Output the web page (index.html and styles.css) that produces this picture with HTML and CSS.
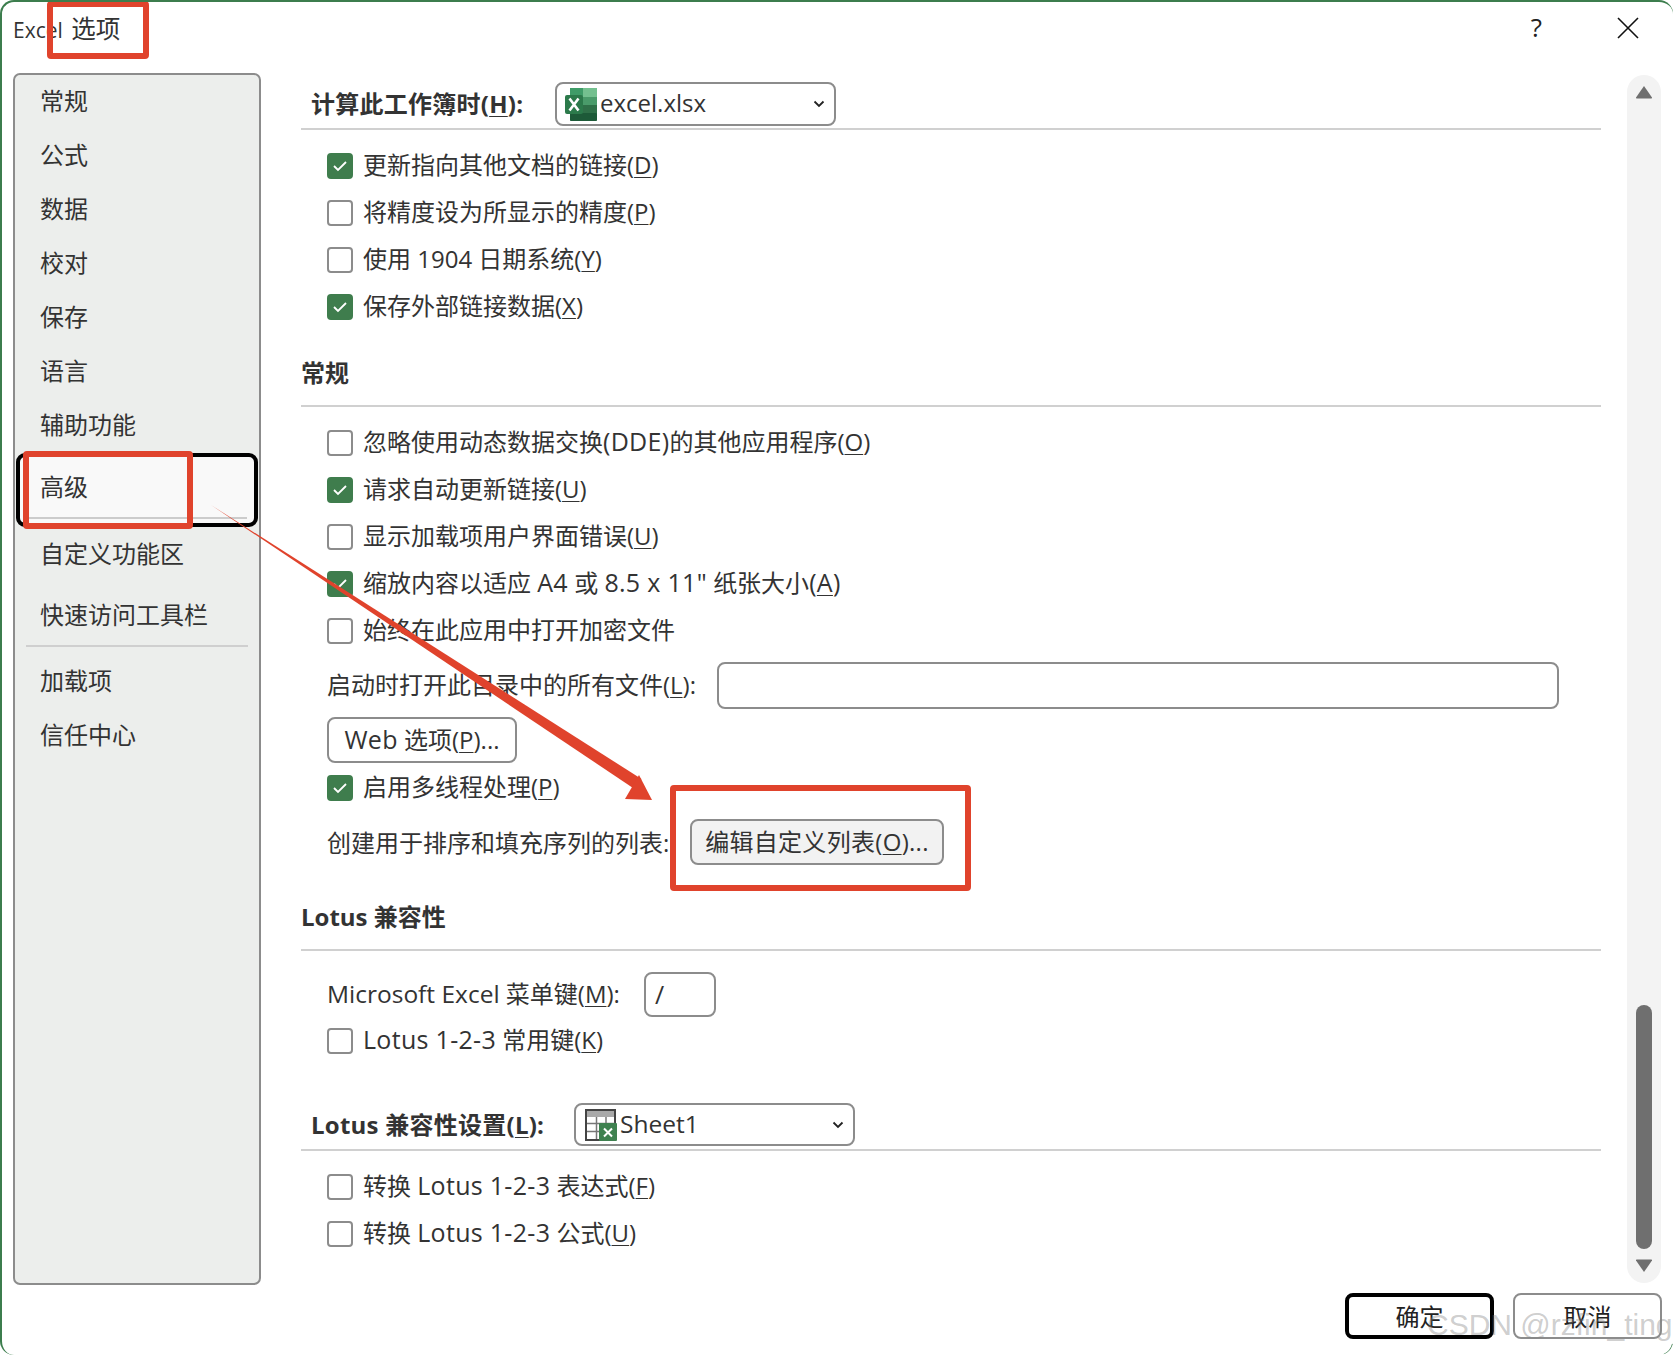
FILE: index.html
```html
<!DOCTYPE html>
<html lang="zh-CN">
<head>
<meta charset="utf-8">
<title>Excel 选项</title>
<link rel="stylesheet" href="styles.css">
</head>
<body>
<div class="window">
  <header class="titlebar">
    <span class="title">Excel <span class="title-cjk">选项</span></span>
    <span class="help">?</span>
    <svg class="close" width="22" height="22" viewBox="0 0 22 22"><path d="M1 1L21 21M21 1L1 21" stroke="#111" stroke-width="1.6" fill="none"/></svg>
  </header>
  <div class="content">
    <nav class="sidebar">
      <div class="nav">常规</div>
      <div class="nav">公式</div>
      <div class="nav">数据</div>
      <div class="nav">校对</div>
      <div class="nav">保存</div>
      <div class="nav">语言</div>
      <div class="nav">辅助功能</div>
      <div class="nav nav-active">高级<i class="nav-rule"></i></div>
      <div class="nav nav-custom">自定义功能区</div>
      <div class="nav nav-quick">快速访问工具栏</div>
      <div class="divider"></div>
      <div class="nav nav-addin">加载项</div>
      <div class="nav">信任中心</div>
    </nav>
    <main class="main">
      <div class="combo-head head-first">
        <span class="combo-label label-calc">计算此工作簿时(<u>H</u>):</span>
        <div class="combo combo-book">
          <svg class="icon-book" width="32" height="33" viewBox="0 0 32 33">
            <rect x="5" y="0" width="27" height="33" rx="2" fill="#2e8b57"/>
            <rect x="18" y="0" width="14" height="9" fill="#74c08f"/>
            <rect x="5" y="0" width="13" height="9" fill="#3f9c68"/>
            <rect x="18" y="9" width="14" height="8" fill="#4a9b6a"/>
            <rect x="5" y="9" width="13" height="8" fill="#2d7d50"/>
            <rect x="18" y="17" width="14" height="8" fill="#2f7048"/>
            <rect x="5" y="17" width="13" height="8" fill="#236e45"/>
            <rect x="5" y="25" width="27" height="8" rx="1" fill="#1d5a38"/>
            <rect x="0" y="7" width="18" height="19" rx="2" fill="#2c7a4b"/>
            <path d="M4.500 10.500L13.500 22.500M13.500 10.500L4.500 22.500" stroke="#fff" stroke-width="2.600" fill="none"/>
          </svg>
          <span class="combo-text text-book">excel.xlsx</span>
          <svg class="chev" width="12" height="8" viewBox="0 0 12 8"><path d="M1.500 1.500L6 6L10.500 1.500" stroke="#222" stroke-width="1.800" fill="none"/></svg>
        </div>
      </div>
      <div class="rows">
        <label class="row"><i class="cb on"><svg width="16" height="12" viewBox="0 0 16 12"><path d="M2 6L6 10L14 2" stroke="#fff" stroke-width="1.800" fill="none"/></svg></i><span class="txt">更新指向其他文档的链接(<u>D</u>)</span></label>
        <label class="row"><i class="cb"></i><span class="txt">将精度设为所显示的精度(<u>P</u>)</span></label>
        <label class="row"><i class="cb"></i><span class="txt">使用 1904 日期系统(<u>Y</u>)</span></label>
        <label class="row"><i class="cb on"><svg width="16" height="12" viewBox="0 0 16 12"><path d="M2 6L6 10L14 2" stroke="#fff" stroke-width="1.800" fill="none"/></svg></i><span class="txt">保存外部链接数据(<u>X</u>)</span></label>
      </div>
      <h2 class="section sec-general">常规</h2>
      <div class="rows">
        <label class="row"><i class="cb"></i><span class="txt">忽略使用动态数据交换<span class="la">(DDE)</span>的其他应用程序(<u>O</u>)</span></label>
        <label class="row"><i class="cb on"><svg width="16" height="12" viewBox="0 0 16 12"><path d="M2 6L6 10L14 2" stroke="#fff" stroke-width="1.800" fill="none"/></svg></i><span class="txt">请求自动更新链接(<u>U</u>)</span></label>
        <label class="row"><i class="cb"></i><span class="txt">显示加载项用户界面错误(<u>U</u>)</span></label>
        <label class="row"><i class="cb on"><svg width="16" height="12" viewBox="0 0 16 12"><path d="M2 6L6 10L14 2" stroke="#fff" stroke-width="1.800" fill="none"/></svg></i><span class="txt">缩放内容以适应 <span class="la">A4</span> 或 <span class="la">8.5 x 11"</span> 纸张大小<span class="la">(<u>A</u>)</span></span></label>
        <label class="row"><i class="cb"></i><span class="txt">始终在此应用中打开加密文件</span></label>
      </div>
      <div class="field-row">
        <span class="field-label">启动时打开此目录中的所有文件(<u>L</u>):</span>
        <div class="input input-path"></div>
      </div>
      <div class="btn btn-web"><span class="la">Web</span> 选项(<u>P</u>)...</div>
      <label class="row row-thread"><i class="cb on"><svg width="16" height="12" viewBox="0 0 16 12"><path d="M2 6L6 10L14 2" stroke="#fff" stroke-width="1.800" fill="none"/></svg></i><span class="txt">启用多线程处理(<u>P</u>)</span></label>
      <div class="list-row">
        <span class="list-label">创建用于排序和填充序列的列表:</span>
        <div class="btn btn-list">编辑自定义列表(<u>O</u>)...</div>
      </div>
      <h2 class="section sec-lotus">Lotus 兼容性</h2>
      <div class="menu-row">
        <span class="menu-label"><span class="la-soft">Microsoft Excel</span> 菜单键(<u>M</u>):</span>
        <div class="input input-key">/</div>
      </div>
      <label class="row"><i class="cb"></i><span class="txt"><span class="la">Lotus 1-2-3</span> 常用键(<u>K</u>)</span></label>
      <div class="combo-head head-lotus">
        <span class="combo-label label-lotus">Lotus 兼容性设置(<u>L</u>):</span>
        <div class="combo combo-sheet">
          <svg class="icon-sheet" width="32" height="32" viewBox="0 0 32 32">
            <rect x="1" y="1" width="29" height="30" fill="#fff" stroke="#444" stroke-width="2"/>
            <rect x="2" y="2" width="27" height="6" fill="#a9a9a9"/>
            <path d="M2 14.500H30M2 22.500H30M11.500 8V30M21 8V30" stroke="#777" stroke-width="1.500" fill="none"/>
            <rect x="14" y="14" width="18" height="18" rx="1" fill="#3f8150"/>
            <path d="M19 19.500L27 27.500M27 19.500L19 27.500" stroke="#fff" stroke-width="2" fill="none"/>
          </svg>
          <span class="combo-text text-sheet">Sheet1</span>
          <svg class="chev" width="12" height="8" viewBox="0 0 12 8"><path d="M1.500 1.500L6 6L10.500 1.500" stroke="#222" stroke-width="1.800" fill="none"/></svg>
        </div>
      </div>
      <div class="rows">
        <label class="row"><i class="cb"></i><span class="txt">转换 <span class="la">Lotus 1-2-3</span> 表达式(<u>F</u>)</span></label>
        <label class="row"><i class="cb"></i><span class="txt">转换 <span class="la">Lotus 1-2-3</span> 公式(<u>U</u>)</span></label>
      </div>
    </main>
    <div class="scrollbar">
      <svg class="arrow" width="18" height="14" viewBox="0 0 18 14"><path d="M9 1L17 12.500Q17.500 13.500 16 13.500H2Q.5 13.500 1 12.500Z" fill="#6f6f6f"/></svg>
      <div class="thumb"></div>
      <svg class="arrow" width="18" height="14" viewBox="0 0 18 14"><path d="M9 13L17 1.500Q17.500 .5 16 .5H2Q.5 .5 1 1.500Z" fill="#6f6f6f"/></svg>
    </div>
  </div>
  <footer class="footer">
    <div class="btn btn-ok">确定</div>
    <div class="btn btn-cancel">取消</div>
  </footer>

  <div class="mark mark-title"></div>
  <div class="mark mark-nav"></div>
  <div class="mark mark-list"></div>
  <svg class="arrow-overlay" width="1673" height="1355" viewBox="0 0 1673 1355">
    <path d="M211 505L634.500 789L641.500 779Z" fill="#e0432c"/>
    <path d="M652 800L625 799L639 775Z" fill="#e0432c"/>
    <path d="M1673 1344Q1671 1352 1664 1355" stroke="#3c7d4d" stroke-width="2" fill="none"/>
  </svg>
  <div class="watermark">CSDN @rzfin_ting</div>
</div>
</body>
</html>
```
FILE: styles.css
```css
* { box-sizing: border-box; }
html, body { margin: 0; padding: 0; background: #fff; }
body {
  width: 1673px;
  height: 1355px;
  overflow: hidden;
  font-family: "Open Sans", "Noto Sans CJK SC", sans-serif;
  font-size: 24px;
  color: #333;
}
u { text-underline-offset: 3px; text-decoration-thickness: 1px; }
.la { font-size: 25px; letter-spacing: .3px; }
.la-soft { font-size: 24.500px; }

.window {
  position: relative;
  width: 1673px;
  height: 1355px;
  background: #fff;
  border-top: 2px solid #3c7d4d;
  border-left: 2px solid #3c7d4d;
  border-radius: 14px;
  overflow: hidden;
}

/* title bar */
.titlebar {
  display: flex;
  align-items: center;
  height: 71px;
  padding: 0 34px 18px 11px;
}
.title { font-size: 21px; color: #333; flex: 1; margin-top: -3px; }
.title-cjk { font-size: 24.500px; margin-left: 3px; }
.help { font-size: 26px; color: #222; margin-right: 75px; margin-top: -3px; }
.close { display: block; margin-top: -1px; }

/* content */
.content { display: flex; align-items: flex-start; padding-left: 11px; }
.sidebar {
  width: 248px;
  height: 1212px;
  flex: none;
  background: #eceeec;
  border: 2px solid #8c8c8c;
  border-radius: 7px;
}
.nav {
  position: relative;
  height: 54px;
  line-height: 52px;
  padding-left: 25px;
  color: #333;
}
.nav-active {
  height: 74px;
  line-height: 60px;
  width: 242px;
  margin-left: 1px;
  padding-left: 20px;
  background: #f9f9f9;
  border: 4px solid #000;
  border-radius: 9px;
}
.nav-rule {
  position: absolute;
  left: 8px;
  right: 7px;
  bottom: 4px;
  height: 2px;
  background: #ccc;
}
.nav-custom { line-height: 53px; }
.nav-quick { height: 64px; line-height: 68px; }
.divider { height: 2px; background: #cfcfcf; margin: 0 11px; }
.nav-addin { margin-top: 8px; }

/* main */
.main { width: 1300px; margin-left: 40px; flex: none; }
.combo-head {
  display: flex;
  align-items: center;
  padding-left: 10px;
  border-bottom: 2px solid #d0d0d0;
}
.head-first { padding-top: 9px; padding-bottom: 2px; }
.head-lotus { margin-top: 39px; padding-bottom: 3px; }
.combo-label { flex: none; font-weight: 700; color: #333; margin-bottom: 4px; letter-spacing: .25px; }
.label-calc { width: 244px; }
.label-lotus { width: 263px; margin-bottom: 2px; }
.combo {
  display: flex;
  align-items: center;
  border: 2px solid #8c8c8c;
  border-radius: 8px;
  background: #fff;
}
.combo-book { width: 281px; height: 44px; padding: 0 9px 0 8px; }
.combo-sheet { width: 281px; height: 43px; padding: 0 9px 0 9px; }
.combo-text { flex: 1; margin-left: 3px; white-space: nowrap; }
.text-book { margin-top: -4px; font-size: 24px; }
.text-sheet { margin-top: -2px; font-size: 24.500px; }
.icon-book, .icon-sheet { flex: none; }
.chev { flex: none; }

.rows { margin-top: 12px; }
.row {
  display: flex;
  align-items: center;
  height: 47px;
  padding-left: 26px;
  color: #333;
}
.txt { margin-bottom: 5px; white-space: nowrap; }
.cb {
  display: flex;
  align-items: center;
  justify-content: center;
  width: 26px;
  height: 26px;
  flex: none;
  margin-right: 10px;
  border: 2px solid #8c8c8c;
  border-radius: 4px;
  background: #fff;
}
.cb.on { background: #3f7d4d; border-color: #3f7d4d; }

.section {
  margin: 0;
  height: 57px;
  line-height: 45px;
  font-size: 24px;
  font-weight: 700;
  color: #333;
  border-bottom: 2px solid #d0d0d0;
}
.sec-general { margin-top: 20px; }
.sec-lotus { margin-top: 29px; }

.field-row { display: flex; align-items: center; height: 47px; margin-top: 8px; padding-left: 26px; }
.field-label { width: 390px; flex: none; white-space: nowrap; margin-bottom: 4px; }
.input { border: 2px solid #8c8c8c; border-radius: 8px; background: #fff; }
.input-path { width: 842px; height: 47px; }

.btn {
  display: flex;
  align-items: center;
  justify-content: center;
  gap: 7px;
  border: 2px solid #8c8c8c;
  border-radius: 8px;
  background: #fff;
  white-space: pre;
  color: #333;
}
.btn-web { display: block; width: 190px; height: 46px; margin: 8px 0 0 26px; line-height: 40px; text-align: center; }
.row-thread { margin-top: 1px; }
.list-row { display: flex; align-items: center; height: 46px; margin-top: 8px; padding-left: 26px; }
.list-label { width: 363px; flex: none; white-space: nowrap; margin-bottom: 2px; }
.btn-list { display: block; width: 254px; height: 46px; background: #f2f2f2; line-height: 42px; text-align: center; letter-spacing: .3px; }

.menu-row { display: flex; align-items: center; height: 45px; margin-top: 21px; padding-left: 26px; }
.menu-label { width: 317px; flex: none; white-space: nowrap; margin-bottom: 4px; }
.input-key { width: 72px; height: 45px; padding-left: 9px; line-height: 41px; font-size: 25px; }

/* scrollbar */
.scrollbar {
  display: flex;
  flex-direction: column;
  align-items: center;
  width: 34px;
  height: 1208px;
  margin: 2px 0 0 26px;
  flex: none;
  background: #f3f3f3;
  border-radius: 17px;
  padding-top: 10px;
}
.arrow { display: block; flex: none; }
.thumb {
  width: 16px;
  height: 244px;
  margin-top: 906px;
  margin-bottom: 10px;
  background: #6f6f6f;
  border-radius: 8px;
}

/* footer */
.footer {
  display: flex;
  justify-content: flex-end;
  gap: 19px;
  margin-top: 8px;
  padding-right: 11px;
}
.btn-ok { width: 149px; height: 46px; border: 4px solid #000; color: #222; padding-bottom: 2px; }
.btn-cancel { width: 149px; height: 46px; color: #222; padding-bottom: 2px; }

/* overlays: screenshot annotations */
.mark {
  position: absolute;
  border: 6px solid #e0432c;
  border-radius: 4px;
  pointer-events: none;
}
.mark-title { left: 45px; top: -1px; width: 102px; height: 58px; }
.mark-nav { left: 21px; top: 449px; width: 170px; height: 78px; }
.mark-list { left: 668px; top: 783px; width: 301px; height: 106px; }
.arrow-overlay { position: absolute; left: -2px; top: -2px; pointer-events: none; }
.watermark {
  position: absolute;
  left: 1425px;
  top: 1303px;
  font-family: "Liberation Sans", sans-serif;
  font-size: 30px;
  line-height: 40px;
  color: rgba(130, 130, 130, 0.4);
  white-space: nowrap;
}
```
